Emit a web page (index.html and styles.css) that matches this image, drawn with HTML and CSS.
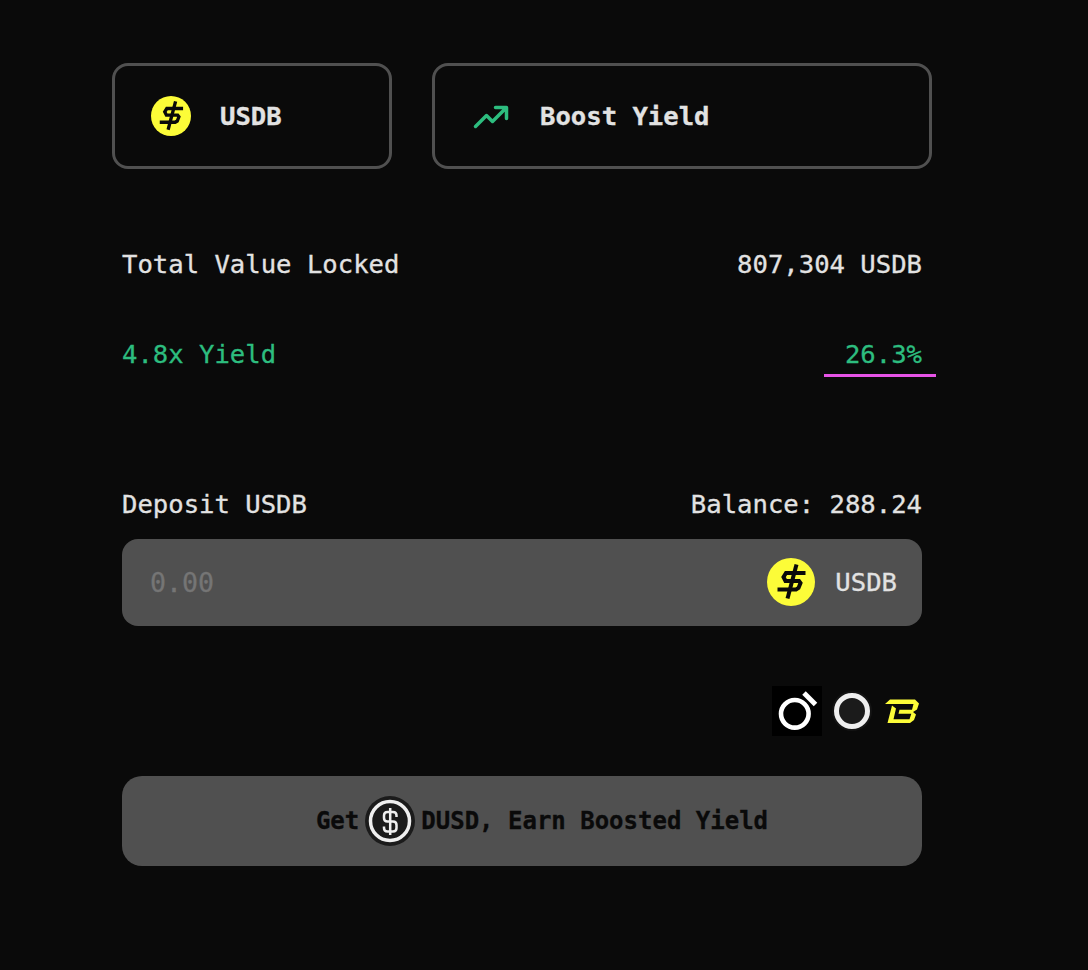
FILE: index.html
```
<!DOCTYPE html>
<html lang="en">
<head>
  <meta charset="UTF-8">
  <meta name="viewport" content="width=device-width, initial-scale=1.0">
  <title>Boost Yield</title>
  <link rel="stylesheet" href="styles.css">
</head>
<body>
  <!-- Shared USDB coin -->
  <svg class="defs" width="0" height="0">
    <symbol id="usdb" viewBox="0 0 48 48">
      <circle cx="24" cy="24" r="24" fill="#fcfc38"/>
      <path d="M29.500 6.500 20.500 40.500" fill="none" stroke="#0a0a0a" stroke-width="4"/>
      <path d="M38.500 15H19L16.500 19 18.500 23H32L33.500 25 31.500 30 29 31.500H10.500" fill="none" stroke="#0a0a0a" stroke-width="4"/>
    </symbol>
  </svg>

  <main class="container">
    <!-- Token and strategy -->
    <div class="cards">
      <div class="card card-token">
        <svg class="card-icon"><use href="#usdb"/></svg>
        <span>USDB</span>
      </div>
      <div class="card card-strategy">
        <svg class="card-icon" viewBox="0 0 40 40" fill="none" stroke="#2dbd7f" stroke-width="3.500" stroke-linecap="round" stroke-linejoin="round">
          <path d="M4.500 30.500 15.500 19.500 21.500 25.500 35 12M24.500 11.500H35.500V22.500"/>
        </svg>
        <span>Boost Yield</span>
      </div>
    </div>

    <!-- Stats -->
    <div class="row">
      <span>Total Value Locked</span>
      <span>807,304 USDB</span>
    </div>
    <div class="row row-yield">
      <span>4.8x Yield</span>
      <span class="rate">26.3%</span>
    </div>

    <!-- Deposit form -->
    <form class="deposit">
      <div class="row">
        <label for="amount">Deposit USDB</label>
        <span>Balance: 288.24</span>
      </div>
      <div class="field">
        <input type="text" id="amount" placeholder="0.00">
        <svg class="field-icon"><use href="#usdb"/></svg>
        <span>USDB</span>
      </div>

      <div class="partners">
        <svg class="ring-logo" viewBox="0 0 50 50" fill="none" stroke="#fff">
          <rect width="50" height="50" fill="#000" stroke="none"/>
          <circle cx="22.800" cy="27.800" r="13.800" stroke-width="4.600"/>
          <path d="M32 7 43.500 18.500" stroke-width="5"/>
        </svg>
        <svg class="circle-logo" viewBox="0 0 40 40">
          <circle cx="20" cy="20" r="20" fill="#141414"/>
          <circle cx="20" cy="20" r="15.500" fill="#1b1b1b" stroke="#efefef" stroke-width="5"/>
        </svg>
        <svg class="blast-logo" viewBox="0 0 34 25" fill="#fcfc38">
          <path d="M5 .5H30L34 4.500 32 10.500 28 13 31 15.500 29 21 25 24H2.500L7 6.500 11 9.500 8.500 20.300H24.500L26.300 14.700H13.500L14.500 10.800H27L28.500 5H0Z"/>
        </svg>
      </div>

      <button type="button" class="submit">
        <span>Get</span>
        <svg class="submit-icon" viewBox="0 0 50 50" fill="none" stroke="#efefef">
          <circle cx="25" cy="25" r="25" fill="#1b1b1b" stroke="none"/>
          <circle cx="25" cy="25" r="19.500" stroke-width="3.500"/>
          <path d="M25.200 12V39M31.500 21V19.500Q31.500 16 28 16H22.500Q19 16 19 19.500V22Q19 25.500 22.500 25.500H28Q31.500 25.500 31.500 29V32Q31.500 35.500 28 35.500H22.500Q19 35.500 19 32V30.500" stroke-width="2.500"/>
        </svg>
        <span>DUSD, Earn Boosted Yield</span>
      </button>
    </form>
  </main>
</body>
</html>
```
FILE: styles.css
```
/* Global Styles */
* {
  box-sizing: border-box;
}

body {
  margin: 0;
  min-height: 100vh;
  background-color: #0a0a0a;
  color: #e2e2e2;
  font-family: "DejaVu Sans Mono", Menlo, monospace;
  font-size: 25.6px;
  line-height: 30px;
  -webkit-text-stroke: 0.3px; /* Slightly heavier text */
}

svg {
  display: block;
  flex-shrink: 0;
}

.defs {
  position: absolute;
}

.container {
  width: 820px;
  margin-left: 112px;
  padding-top: 63px;
}

/* Cards */
.cards {
  display: flex;
  gap: 40px;
  margin-bottom: 80px;
}

.card {
  display: flex;
  align-items: center;
  gap: 29px;
  height: 106px;
  padding-left: 36px;
  border: 3px solid #505050;
  border-radius: 16px;
  font-weight: bold;
}

.card-token {
  width: 280px;
}

.card-strategy {
  flex: 1;
}

.card-icon {
  width: 40px;
  height: 40px;
}

/* Label / value rows */
.row {
  display: flex;
  justify-content: space-between;
  padding: 0 10px;
}

.row-yield {
  margin-top: 60px;
  color: #2dbd7f;
}

.rate {
  position: relative;
}

/* Underline runs wider than the number */
.rate::after {
  content: "";
  position: absolute;
  left: -21px;
  right: -14px;
  bottom: -8px;
  height: 3px;
  background-color: #e653e6;
}

/* Deposit form */
.deposit {
  margin-top: 120px;
}

.field {
  display: flex;
  align-items: center;
  height: 87px;
  margin: 20px 10px 0;
  padding: 0 25px 1px 28px;
  border-radius: 16px;
  background-color: #505050;
}

.field input {
  flex: 1;
  min-width: 0;
  padding: 0;
  border: none;
  outline: none;
  background: none;
  color: #e2e2e2;
  font-family: inherit;
  font-size: 26.6px;
}

.field input::placeholder {
  color: #757575;
}

.field-icon {
  width: 48px;
  height: 48px;
  margin-right: 20px;
}

.partners {
  display: flex;
  align-items: center;
  justify-content: flex-end;
  margin: 60px 13px 40px 0;
}

.ring-logo {
  width: 50px;
  height: 50px;
}

.circle-logo {
  width: 40px;
  height: 40px;
  margin: 0 13px 0 10px;
}

.blast-logo {
  width: 34px;
  height: 25px;
}

.submit {
  display: flex;
  align-items: center;
  justify-content: center;
  gap: 6px;
  width: 800px;
  height: 90px;
  margin: 0 10px;
  padding: 0 0 0 40px;
  border: none;
  border-radius: 20px;
  background-color: #505050;
  color: #0a0a0a;
  font-family: inherit;
  font-size: 24px;
  font-weight: bold;
}

.submit-icon {
  width: 50px;
  height: 50px;
}
```
